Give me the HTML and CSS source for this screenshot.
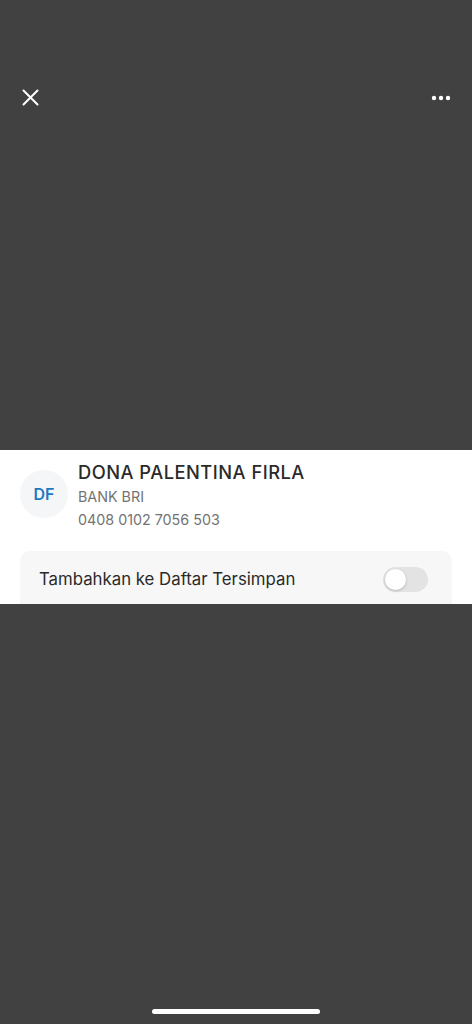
FILE: index.html
```html
<!DOCTYPE html>
<html lang="id">
<head>
<meta charset="UTF-8" />
<meta name="viewport" content="width=device-width, initial-scale=1.0">
<title>Detail Penerima</title>
<link rel="stylesheet" href="styles.css">
</head>
<body>

<div class="screen">
  <!-- Top bar -->
  <header class="topbar">
    <button class="icon-btn close" aria-label="Tutup">
      <svg width="17" height="17" viewBox="0 0 17 17">
        <path d="M1.5 1.5 L15.5 15.5 M15.5 1.5 L1.5 15.5" stroke="#fff" stroke-width="2" stroke-linecap="round" fill="none"/>
      </svg>
    </button>
    <button class="icon-btn more" aria-label="Lainnya">
      <svg width="20" height="6" viewBox="0 0 20 6">
        <circle cx="3" cy="3" r="2.2" fill="#fff"/>
        <circle cx="10" cy="3" r="2.2" fill="#fff"/>
        <circle cx="17" cy="3" r="2.2" fill="#fff"/>
      </svg>
    </button>
  </header>

  <!-- Recipient sheet -->
  <section class="sheet">
    <div class="recipient">
      <div class="avatar">DF</div>
      <div class="info">
        <div class="name">DONA PALENTINA FIRLA</div>
        <div class="bank">BANK BRI</div>
        <div class="account">0408 0102 7056 503</div>
      </div>
    </div>

    <div class="save-card">
      <span>Tambahkan ke Daftar Tersimpan</span>
      <span class="toggle"><span class="knob"></span></span>
    </div>
  </section>

  <div class="home-indicator"></div>
</div>

</body>
</html>
```

FILE: styles.css
```css
/* Base styles */
body {
  margin: 0;
  padding: 0;
  background: #414141;
  font-family: Inter, 'Noto Sans', sans-serif;
  color: #2b2b2b;
}

.screen {
  display: flex;
  flex-direction: column;
  height: 1024px;
}

/* Top bar */
.topbar {
  display: flex;
  justify-content: space-between;
  align-items: center;
  padding: 89px 21px 0 22px;
  height: 17px;
}

.icon-btn {
  background: none;
  border: none;
  padding: 0;
  display: flex;
  cursor: pointer;
}

.close {
  width: 17px;
  height: 17px;
}

/* Recipient sheet */
.sheet {
  margin-top: 344px;
  height: 154px;
  background: #fff;
  overflow: hidden;
}

.recipient {
  display: flex;
  gap: 10px;
  padding: 11px 20px 0;
}

.avatar {
  width: 48px;
  height: 48px;
  margin-top: 9px;
  border-radius: 50%;
  background: #f5f6f7;
  color: #1f78c1;
  font-weight: 600;
  font-size: 16px;
  display: flex;
  align-items: center;
  justify-content: center;
}

.info {
  display: flex;
  flex-direction: column;
}

.name {
  font-size: 18.3px;
  font-weight: 500;
  letter-spacing: 0.5px;
  line-height: 22px;
  color: #2a2a2a;
}

.bank,
.account {
  font-size: 14.3px;
  line-height: 23px;
  color: #737373;
}

.bank {
  margin-top: 2px;
}

.save-card {
  display: flex;
  justify-content: space-between;
  align-items: center;
  margin: 20px 20px 0;
  padding: 0 24px 8px 19px;
  height: 64px;
  border-radius: 10px;
  background: #f7f7f7;
  font-size: 16.8px;
  color: #2a2a2a;
  box-sizing: border-box;
}

.toggle {
  width: 45px;
  height: 25px;
  border-radius: 13px;
  background: #e3e3e3;
  display: flex;
  align-items: center;
  padding: 0 2px;
  box-sizing: border-box;
}

.knob {
  width: 21px;
  height: 21px;
  border-radius: 50%;
  background: #fff;
  box-shadow: 0 1px 3px rgba(0,0,0,0.2);
}

/* Home indicator */
.home-indicator {
  margin: auto auto 10px;
  width: 168px;
  height: 5px;
  border-radius: 3px;
  background: #fff;
}
```
